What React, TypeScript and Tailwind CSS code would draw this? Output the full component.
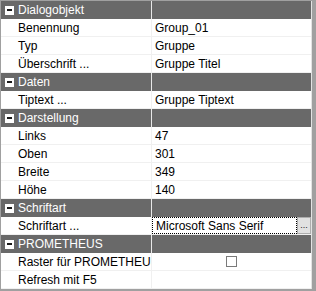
type Row =
  | { kind: "cat"; label: string }
  | { kind: "prop"; label: string; value?: string; editor?: "font" | "check" };

const rows: Row[] = [
  { kind: "cat", label: "Dialogobjekt" },
  { kind: "prop", label: "Benennung", value: "Group_01" },
  { kind: "prop", label: "Typ", value: "Gruppe" },
  { kind: "prop", label: "Überschrift ...", value: "Gruppe Titel" },
  { kind: "cat", label: "Daten" },
  { kind: "prop", label: "Tiptext ...", value: "Gruppe Tiptext" },
  { kind: "cat", label: "Darstellung" },
  { kind: "prop", label: "Links", value: "47" },
  { kind: "prop", label: "Oben", value: "301" },
  { kind: "prop", label: "Breite", value: "349" },
  { kind: "prop", label: "Höhe", value: "140" },
  { kind: "cat", label: "Schriftart" },
  { kind: "prop", label: "Schriftart ...", value: "Microsoft Sans Serif", editor: "font" },
  { kind: "cat", label: "PROMETHEUS" },
  { kind: "prop", label: "Raster für PROMETHEUS", editor: "check" },
  { kind: "prop", label: "Refresh mit F5" },
];

// collapse box
const Minus = () => (
  <span className="ml-[4px] mr-[4px] flex h-[9px] w-[9px] shrink-0 items-center justify-center bg-white">
    <span className="h-[2px] w-[5px] bg-[#1a1a1a]" />
  </span>
);

const App = () => {
  return (
    <div
      className="flex h-[291px] w-[316px] flex-col overflow-hidden bg-[#a0a0a0] pt-px pl-px pr-[4px] pb-[2px] text-[12px] leading-none text-black"
      style={{ fontFamily: '"Liberation Sans", Arial, sans-serif' }}
    >
      <div className="flex flex-1 flex-col border-r border-[#e3e3e3] bg-white">
        {rows.map((row, i) =>
          row.kind === "cat" ? (
            <div key={i} className="flex h-[18px] bg-[#696969] text-white">
              <div className="flex w-[150px] shrink-0 items-center">
                <Minus />
                <span className="whitespace-nowrap">{row.label}</span>
              </div>
              <div className="w-px bg-[#e8e8e8]" />
              <div className="flex-1" />
            </div>
          ) : (
            <div key={i} className="flex h-[18px] border-b border-[#f0f0f0]">
              <div className="flex w-[150px] shrink-0 items-center overflow-hidden pl-[17px]">
                <span className="whitespace-nowrap">{row.label}</span>
              </div>
              <div className="w-px bg-[#f0f0f0]" />
              {row.editor === "font" ? (
                <div className="flex flex-1">
                  <div className="flex flex-1 items-center border border-dotted border-black pl-[3px]">
                    <span className="whitespace-nowrap">{row.value}</span>
                  </div>
                  <div className="flex w-[14px] items-center justify-center border border-[#adadad] bg-[#e1e1e1] text-[9px] text-[#222]">
                    ...
                  </div>
                </div>
              ) : row.editor === "check" ? (
                <div className="flex flex-1 items-center justify-center">
                  <span className="h-[11px] w-[11px] border border-[#7a7a7a] bg-white" />
                </div>
              ) : (
                <div className="flex flex-1 items-center pl-[3px]">
                  <span className="whitespace-nowrap">{row.value}</span>
                </div>
              )}
            </div>
          )
        )}
      </div>
    </div>
  );
};

export default App;
